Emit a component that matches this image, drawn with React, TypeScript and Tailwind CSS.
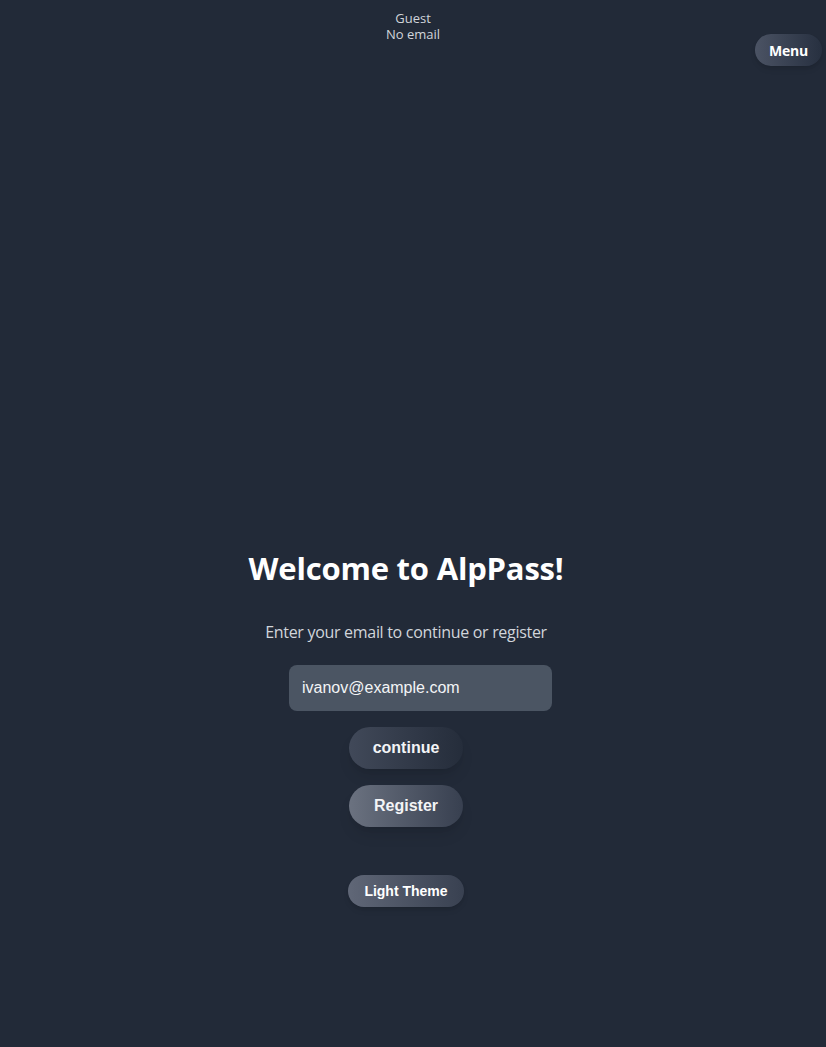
import { useState } from "react";

export default function App() {
    const [email, setEmail] = useState("ivanov@example.com");

    return (
        <div className="min-h-screen bg-[#222a38] relative font-['Open_Sans',sans-serif]">

            <header className="w-full pt-[10px] flex flex-col items-center text-[13px] leading-[16px] text-[#d1d5db]">
                <span>Guest</span>
                <span>No email</span>
            </header>

            <button className="absolute top-[34px] right-[4px] h-[32px] px-[14px] rounded-full bg-gradient-to-r from-[#4b5364] to-[#273040] text-white text-[14px] font-bold tracking-[-0.2px] shadow-md">
                Menu
            </button>

            <main className="flex flex-col items-center pt-[506px] pr-[14px]">
                <h1 className="text-[31px] leading-[40px] font-bold tracking-[-0.2px] text-white">Welcome to AlpPass!</h1>

                <p className="mt-[32px] text-[16px] leading-[24px] tracking-[-0.3px] text-[#d1d5db]">
                    Enter your email to continue or register
                </p>

                <input
                    type="email"
                    value={email}
                    onChange={(e) => setEmail(e.target.value)}
                    className="mt-[21px] ml-[29px] w-[263px] h-[46px] px-[13px] rounded-lg bg-[#4b5563] text-[#f3f4f6] text-[16px] outline-none font-['Liberation_Sans',sans-serif]"
                />

                <button className="mt-[16px] w-[114px] h-[42px] rounded-full bg-gradient-to-r from-[#414959] to-[#252d3b] text-[#f3f4f6] text-[16px] font-bold shadow-lg font-['Liberation_Sans',sans-serif]">
                    continue
                </button>

                <button className="mt-[16px] w-[114px] h-[42px] rounded-full bg-gradient-to-r from-[#6b7280] to-[#384050] text-[#f3f4f6] text-[16px] font-bold shadow-lg font-['Liberation_Sans',sans-serif]">
                    Register
                </button>

                <button className="mt-[48px] w-[116px] h-[32px] rounded-full bg-gradient-to-r from-[#606777] to-[#394151] text-white text-[14px] font-bold shadow-md font-['Liberation_Sans',sans-serif]">
                    Light Theme
                </button>
            </main>
        </div>
    );
}
